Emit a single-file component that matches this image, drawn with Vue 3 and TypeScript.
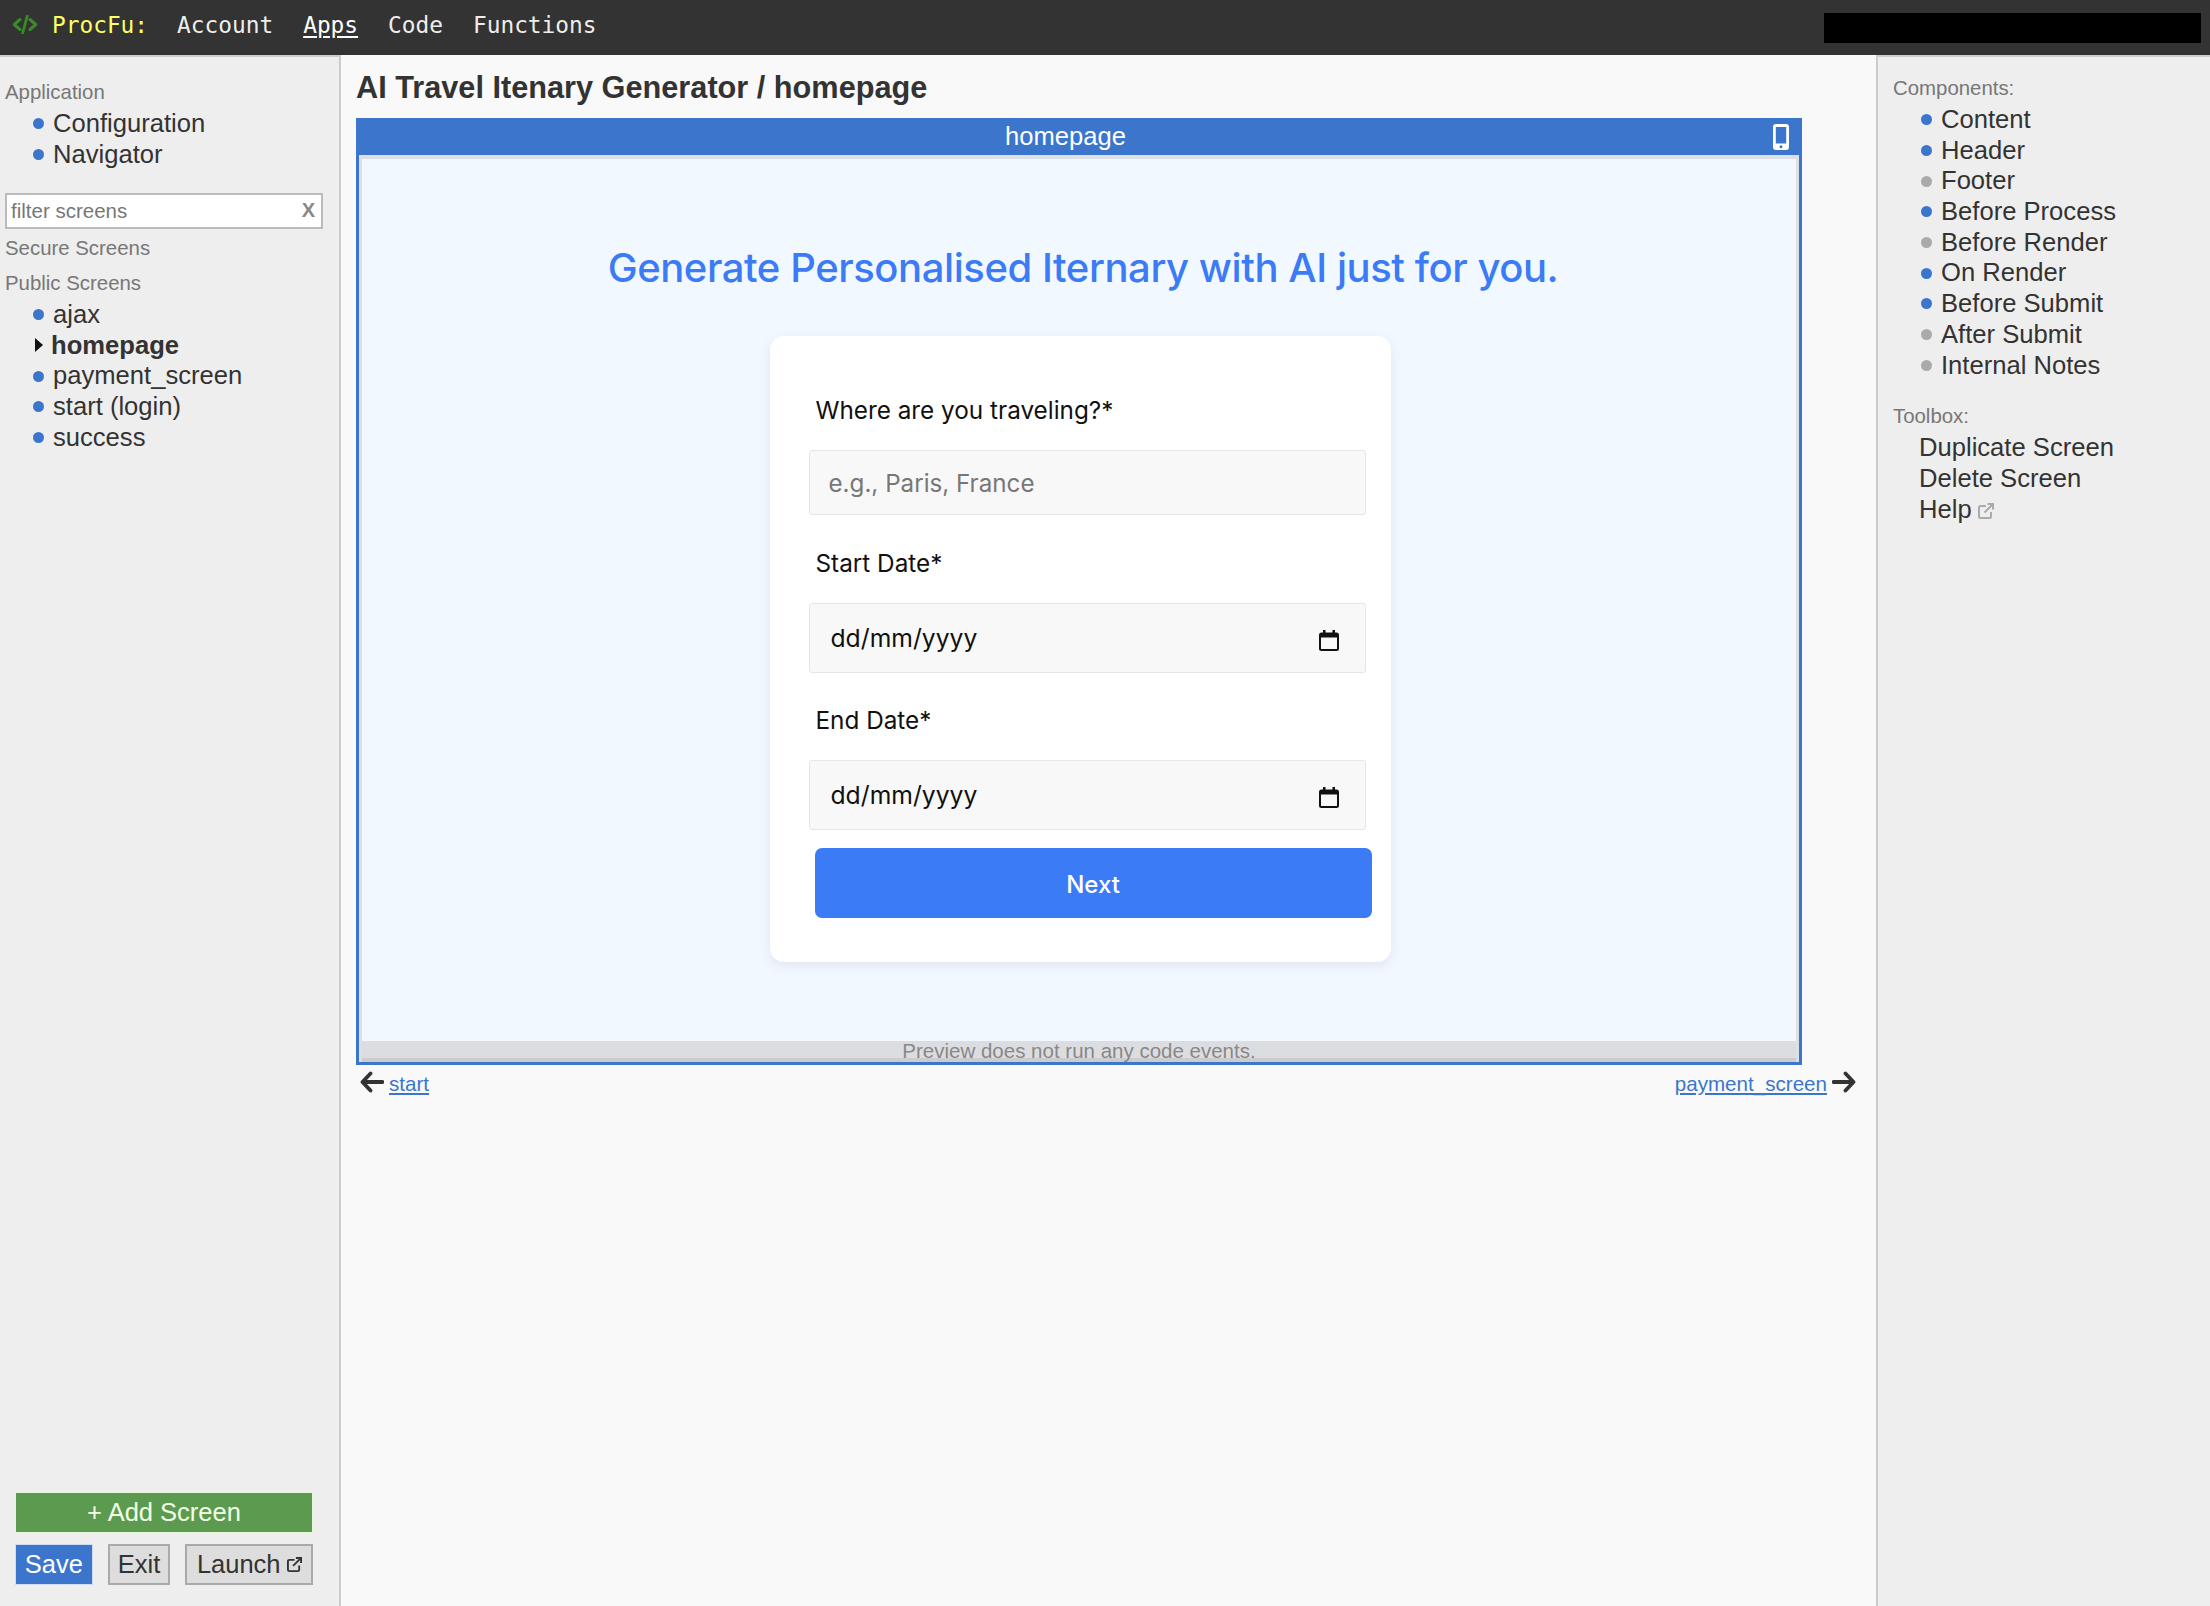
<script setup lang="ts">
interface Item { label: string; on?: boolean }
const appItems: Item[] = [{ label: 'Configuration', on: true }, { label: 'Navigator', on: true }]
const screens = ['ajax', 'homepage', 'payment_screen', 'start (login)', 'success']
const components: Item[] = [
  { label: 'Content', on: true },
  { label: 'Header', on: true },
  { label: 'Footer' },
  { label: 'Before Process', on: true },
  { label: 'Before Render' },
  { label: 'On Render', on: true },
  { label: 'Before Submit', on: true },
  { label: 'After Submit' },
  { label: 'Internal Notes' },
]
const navItems = ['Account', 'Apps', 'Code', 'Functions']
</script>

<template>
  <div class="page">
    <header class="topbar">
      <svg class="logo" viewBox="0 0 26 19" width="26" height="19">
        <path d="M8 4.500 2.200 9.500 8 14.500M18 4.500 23.800 9.500 18 14.500" fill="none" stroke="#3a8a28" stroke-width="3" stroke-linecap="round" stroke-linejoin="round" />
        <path d="M15.300 1 10.700 18" fill="none" stroke="#3a8a28" stroke-width="2.800" stroke-linecap="round" />
      </svg>
      <span class="brand">ProcFu:</span>
      <nav class="nav">
        <a v-for="n in navItems" :key="n" :class="{ current: n === 'Apps' }">{{ n }}</a>
      </nav>
      <div class="redact"></div>
    </header>

    <div class="columns">
      <aside class="left">
        <div>
          <div class="cap first">Application</div>
          <ul class="list tight">
            <li v-for="i in appItems" :key="i.label"><i class="dot"></i>{{ i.label }}</li>
          </ul>
          <div class="filter"><span>filter screens</span><b>X</b></div>
          <div class="cap secure">Secure Screens</div>
          <div class="cap public">Public Screens</div>
          <ul class="list tight">
            <li v-for="s in screens" :key="s" :class="{ active: s === 'homepage' }">
              <svg v-if="s === 'homepage'" class="tri" viewBox="0 0 8 14" width="8" height="14"><path d="M0 0 8 7 0 14Z" fill="#111" /></svg>
              <i v-else class="dot"></i>{{ s }}
            </li>
          </ul>
        </div>
        <div class="actions">
          <button class="add">+ Add Screen</button>
          <div class="btnrow">
            <button class="save">Save</button>
            <button class="plain exit">Exit</button>
            <button class="plain launch">Launch
              <svg class="ext" viewBox="0 0 16 16" width="15" height="15"><path d="M13 9v4.500a1.500 1.500 0 0 1-1.500 1.500h-9A1.500 1.500 0 0 1 1 13.500v-9A1.500 1.500 0 0 1 2.500 3H8M6.500 9.500 15 1M9.500 1H15v5.500" fill="none" stroke="#333" stroke-width="2" /></svg>
            </button>
          </div>
        </div>
      </aside>

      <main class="main">
        <h1 class="title">AI Travel Itenary Generator / homepage</h1>
        <section class="frame">
          <div class="frame-head">
            <span class="frame-label">homepage</span>
            <svg class="phone" viewBox="0 0 16 26" width="16" height="26">
              <path fill-rule="evenodd" fill="#fff" d="M3 0h10a3 3 0 0 1 3 3v20a3 3 0 0 1-3 3H3a3 3 0 0 1-3-3V3a3 3 0 0 1 3-3ZM2.800 3v16.500h10.400V3ZM8 21.200a1.500 1.500 0 1 0 0 3 1.500 1.500 0 0 0 0-3Z" />
            </svg>
          </div>
          <div class="viewport">
            <div class="canvas">
              <h2 class="hero">Generate Personalised Iternary with AI just for you.</h2>
              <form class="card" @submit.prevent>
                <label class="lbl l1">Where are you traveling?*</label>
                <input class="inp" placeholder="e.g., Paris, France" />
                <label class="lbl l2">Start Date*</label>
                <div class="inp date"><span>dd/mm/yyyy</span>
                  <svg viewBox="0 0 20 21" width="20" height="21"><path fill-rule="evenodd" d="M4 0h2.500v2.500h7V0H16v2.500h1.500A2.500 2.500 0 0 1 20 5v13.500a2.500 2.500 0 0 1-2.500 2.500h-15A2.500 2.500 0 0 1 0 18.500V5a2.500 2.500 0 0 1 2.500-2.500H4ZM2 7.500v11a.5.5 0 0 0 .5.5h15a.5.5 0 0 0 .5-.5v-11Z" fill="#111" /></svg>
                </div>
                <label class="lbl l3">End Date*</label>
                <div class="inp date"><span>dd/mm/yyyy</span>
                  <svg viewBox="0 0 20 21" width="20" height="21"><path fill-rule="evenodd" d="M4 0h2.500v2.500h7V0H16v2.500h1.500A2.500 2.500 0 0 1 20 5v13.500a2.500 2.500 0 0 1-2.500 2.500h-15A2.500 2.500 0 0 1 0 18.500V5a2.500 2.500 0 0 1 2.500-2.500H4ZM2 7.500v11a.5.5 0 0 0 .5.5h15a.5.5 0 0 0 .5-.5v-11Z" fill="#111" /></svg>
                </div>
                <button class="next">Next</button>
              </form>
            </div>
            <div class="preview-note">Preview does not run any code events.</div>
          </div>
        </section>
        <div class="pager">
          <div class="pg">
            <svg viewBox="0 0 24 22" width="24" height="22"><path d="M10.500 2.500 2.500 11 10.500 19.500M3 11h19.500" fill="none" stroke="#333" stroke-width="3.800" stroke-linecap="round" stroke-linejoin="round" /></svg>
            <a>start</a>
          </div>
          <div class="pg">
            <a>payment_screen</a>
            <svg viewBox="0 0 24 22" width="24" height="22"><path d="M13.500 2.500 21.500 11 13.500 19.500M21 11H1.500" fill="none" stroke="#333" stroke-width="3.800" stroke-linecap="round" stroke-linejoin="round" /></svg>
          </div>
        </div>
      </main>

      <aside class="right">
        <div class="cap comp">Components:</div>
        <ul class="list rlist">
          <li v-for="c in components" :key="c.label"><i class="dot" :class="{ off: !c.on }"></i>{{ c.label }}</li>
        </ul>
        <div class="cap tool">Toolbox:</div>
        <ul class="list tools">
          <li>Duplicate Screen</li>
          <li>Delete Screen</li>
          <li>Help
            <svg class="ext help" viewBox="0 0 16 16" width="16" height="16"><path d="M13 9v4.500a1.500 1.500 0 0 1-1.500 1.500h-9A1.500 1.500 0 0 1 1 13.500v-9A1.500 1.500 0 0 1 2.500 3H8M6.500 9.500 15 1M9.500 1H15v5.500" fill="none" stroke="#aaa" stroke-width="2" /></svg>
          </li>
        </ul>
      </aside>
    </div>
  </div>
</template>

<style>
html, body { margin: 0; padding: 0; background: #f9f9f9; }
</style>

<style scoped>
* { box-sizing: border-box; }
.page {
  width: 2210px;
  height: 1606px;
  display: flex;
  flex-direction: column;
  overflow: hidden;
  font-family: "Liberation Sans", Arial, sans-serif;
  color: #333;
  font-size: 25.600px;
}
.topbar {
  height: 55px;
  flex: none;
  background: #333;
  display: flex;
  align-items: center;
  padding: 0 9px 0 12px;
  font-family: "DejaVu Sans Mono", monospace;
  font-size: 22.800px;
}
.logo { flex: none; margin-top: -7px; }
.brand { color: #ffff66; margin-left: 14px; font-weight: 400; margin-top: -6px; }
.nav { display: flex; gap: 30px; margin-left: 29px; margin-top: -6px; }
.nav a { color: #eee; }
.nav a.current { color: #fff; text-decoration: underline; text-underline-offset: 3px; }
.redact { margin-left: auto; width: 377px; height: 30px; background: #000; margin-top: 1px; }
.columns { flex: 1; display: flex; min-height: 0; }
.left {
  width: 341px;
  flex: none;
  background: #eee;
  border-top: 2px solid #ccc;
  border-right: 2px solid #ccc;
  padding: 21px 16px 21px 5px;
  display: flex;
  flex-direction: column;
  justify-content: space-between;
}
.cap { font-size: 20.400px; line-height: 28px; color: #777; }
.list { list-style: none; margin: 0; padding: 0; }
.list li { line-height: 30.700px; height: 30.700px; white-space: nowrap; display: flex; align-items: center; }
.tight { margin-top: 2px; padding-left: 28px; }
.dot {
  width: 11px;
  height: 11px;
  border-radius: 50%;
  background: #3b76cc;
  flex: none;
  margin-right: 9px;
  margin-top: 1px;
}
.dot.off { background: #aaa; }
.tri { margin: 0 8px 0 2px; flex: none; }
.active { font-weight: 700; }
.filter {
  margin-top: 23.600px;
  width: 318px;
  height: 36px;
  background: #fff;
  border: 2px solid #bbb;
  display: flex;
  align-items: center;
  justify-content: space-between;
  padding: 0 6px 0 4px;
  font-size: 20.500px;
  color: #777;
}
.filter b { font-size: 20px; color: #888; }
.secure { margin-top: 5px; }
.public { margin-top: 7px; }
.actions { padding-left: 10px; width: 308px; }
.add {
  display: block;
  width: 298px;
  height: 41px;
  background: #5c9a50;
  border: 1px solid #e6f6d8;
  color: #f2ffe6;
  font: 25.500px "Liberation Sans", Arial, sans-serif;
  padding: 0;
}
.btnrow { display: flex; margin-top: 11px; height: 41px; }
.btnrow button { font: 25.500px "Liberation Sans", Arial, sans-serif; padding: 0; }
.save { width: 78px; background: #3b76cc; color: #fff; border: 1px solid #cfdcf2; }
.plain { background: #ddd; color: #333; border: 2px solid #aaa; }
.exit { width: 63px; margin-left: 15px; }
.launch { width: 128px; margin-left: 15px; display: flex; align-items: center; justify-content: center; gap: 6px; }
.main { flex: 1; min-width: 0; background: #f9f9f9; padding: 13px 0 0 15px; }
.title { margin: 0 0 10px; font-size: 30.700px; line-height: 40px; font-weight: 700; color: #333; }
.frame {
  width: 1446px;
  height: 947px;
  display: flex;
  flex-direction: column;
  border: 3px solid #3b76cc;
  border-top: 0;
}
.frame-head {
  height: 37px;
  flex: none;
  background: #3b76cc;
  color: #fff;
  display: flex;
  align-items: center;
  margin: 0 -3px;
  padding-right: 13px;
}
.frame-label { flex: 1; text-align: center; padding-left: 2px; }
.phone { flex: none; }
.viewport {
  flex: 1;
  min-height: 0;
  display: flex;
  flex-direction: column;
  border-top: 4px solid #dcdfe3;
  border-left: 3px solid #dcdfe3;
  border-right: 3px solid #dcdfe3;
}
.canvas {
  flex: 1;
  min-height: 0;
  background: #f2f8ff;
  display: flex;
  flex-direction: column;
  align-items: center;
  padding-left: 2px;
  font-family: Inter, "Liberation Sans", sans-serif;
}
.hero {
  margin: 85px 0 44px;
  padding-left: 6px;
  font-size: 40px;
  line-height: 48px;
  font-weight: 500;
  letter-spacing: -0.430px;
  color: #3b7bf6;
  white-space: nowrap;
}
.card {
  width: 621px;
  background: #fff;
  border-radius: 14px;
  box-shadow: 0 4px 12px rgba(60, 80, 120, 0.1);
  padding: 59px 25px 44px 39px;
  color: #111;
  font-size: 24.300px;
}
.lbl { display: block; line-height: 30px; margin-left: 7px; }
.l2 { margin-top: 33px; }
.l3 { margin-top: 32px; }
.inp {
  display: flex;
  align-items: center;
  justify-content: space-between;
  width: 557.500px;
  height: 70px;
  margin-top: 25px;
  background: #f8f8f8;
  border: 1.5px solid #e6e6e6;
  border-radius: 3px;
  padding: 0 26px 0 21px;
  font: 24.700px Inter, "Liberation Sans", sans-serif;
  color: #111;
  outline: none;
}
.date span { margin-top: -1px; }
input.inp { height: 65px; padding: 2px 0 0 19px; font-size: 24.200px; }
input.inp::placeholder { color: #777; opacity: 1; }
.date svg { margin-top: 4px; }
.next {
  display: block;
  width: 557px;
  height: 70px;
  margin: 18px 0 0 6px;
  padding: 2px 0 0;
  background: #3b7bf6;
  color: #fff;
  border: 0;
  border-radius: 7px;
  font: 500 24px Inter, "Liberation Sans", sans-serif;
}
.preview-note {
  flex: none;
  height: 21px;
  line-height: 20px;
  background: #dcdde0;
  border-bottom: 4px solid #ccc;
  text-align: center;
  font-size: 20.500px;
  color: #888;
}
.pager {
  width: 1500px;
  display: flex;
  justify-content: space-between;
  align-items: flex-start;
  padding: 6px 0 0 4px;
  font-size: 20.600px;
}
.pg { display: flex; align-items: flex-start; gap: 5px; }
.pg a { color: #3b76cc; text-decoration: underline; line-height: 26px; margin-top: 0; }
.pg svg { flex: none; }
.right {
  width: 334px;
  flex: none;
  background: #eee;
  border-top: 2px solid #ccc;
  border-left: 2px solid #ccc;
  padding: 17px 0 0 15px;
}
.rlist { margin-top: 2px; padding-left: 28px; }
.tool { margin-top: 22px; }
.tools { margin-top: 2px; padding-left: 26px; }
.help { margin-left: 6px; margin-top: 4px; }
</style>
